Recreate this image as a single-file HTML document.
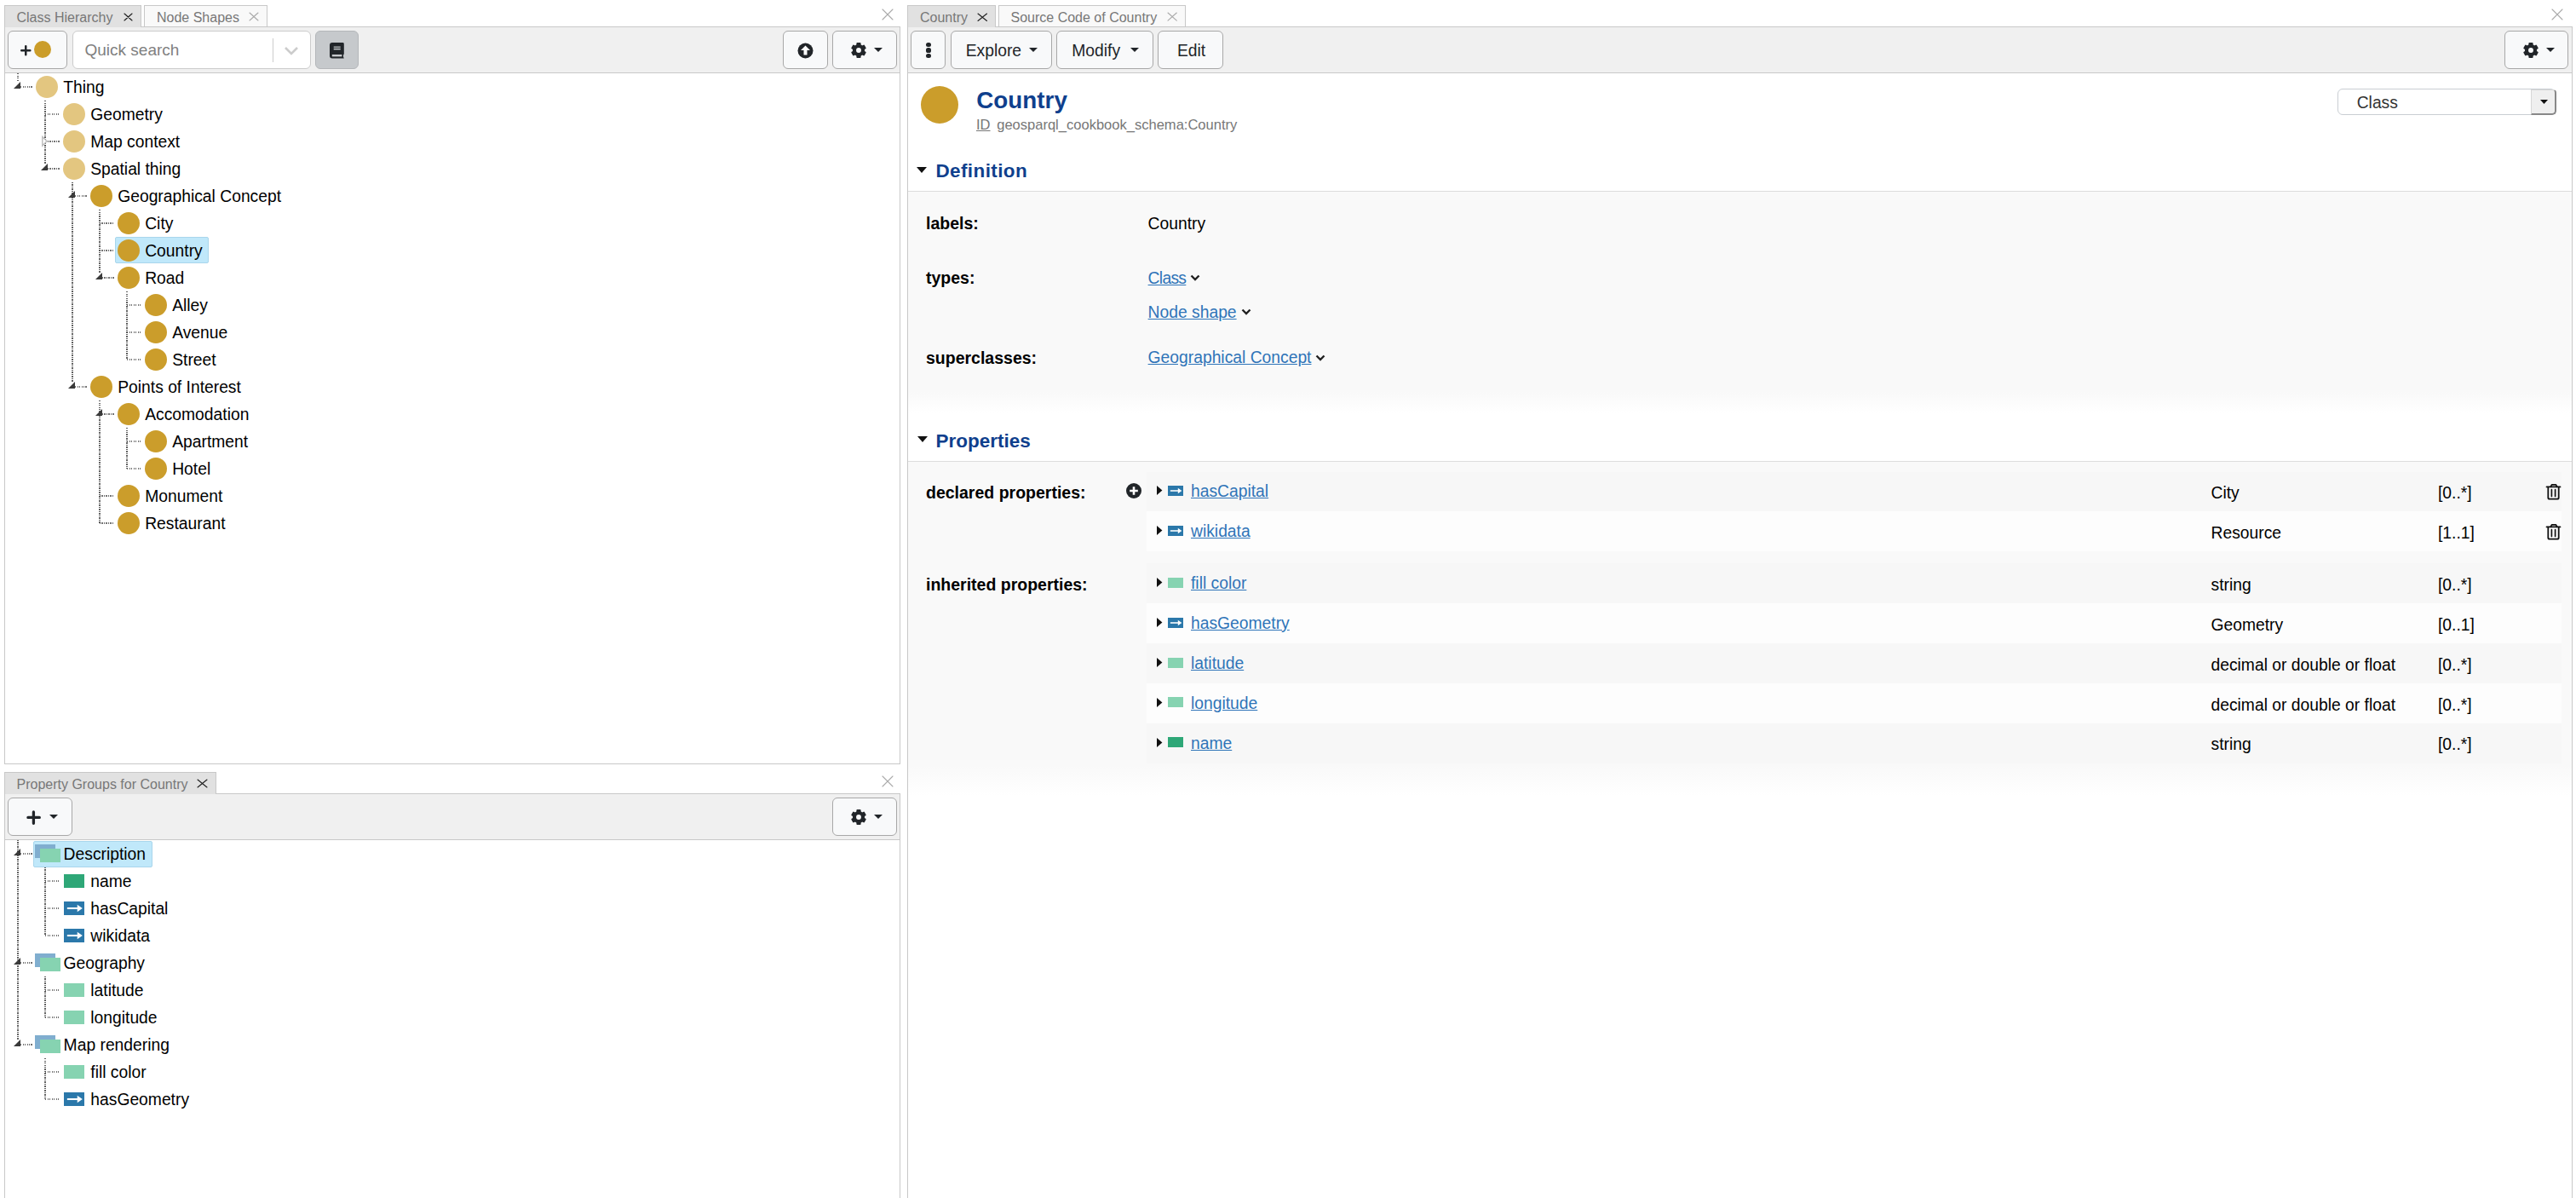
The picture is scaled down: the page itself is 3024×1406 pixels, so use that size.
<!DOCTYPE html>
<html><head><meta charset="utf-8"><style>
html,body{margin:0;padding:0}
body{width:3024px;height:1406px;position:relative;overflow:hidden;background:#fff;font-family:"Liberation Sans",sans-serif;}
.a{position:absolute}
.t{position:absolute;line-height:0;white-space:nowrap}
svg.a{display:block;overflow:visible}
</style></head><body>
<div class="a" style="left:5px;top:31px;width:1052px;height:866px;border:1px solid #c8c8c8;box-sizing:border-box;background:#fff;"></div>
<div class="a" style="left:5px;top:31px;width:1052px;height:55px;background:#f0f0f0;border:1px solid #c8c8c8;box-sizing:border-box;"></div>
<div class="a" style="left:5px;top:6px;width:161px;height:26px;background:#e1e1e1;border:1px solid #c8c8c8;border-bottom:none;box-sizing:border-box;"></div>
<div class="t" style="left:19.5px;top:21.26px;font-size:16px;color:#777;font-weight:400;">Class Hierarchy</div>
<svg class="a" style="left:144.5px;top:14.5px" width="11.0" height="10.0" viewBox="0 0 11.0 10.0"><path d="M1 1L10.0 9.0M10.0 1L1 9.0" stroke="#222" stroke-width="1.15" stroke-linecap="round"/></svg>
<div class="a" style="left:169px;top:6px;width:145px;height:26px;background:#f9f9f9;border:1px solid #c8c8c8;border-bottom:1px solid #c8c8c8;box-sizing:border-box;"></div>
<div class="t" style="left:184px;top:21.26px;font-size:16px;color:#777;font-weight:400;">Node Shapes</div>
<svg class="a" style="left:292px;top:14px" width="12" height="11" viewBox="0 0 12 11"><path d="M1 1L11 10M11 1L1 10" stroke="#aaa" stroke-width="1.1" stroke-linecap="round"/></svg>
<svg class="a" style="left:1035px;top:10px" width="14" height="14" viewBox="0 0 14 14"><path d="M1 1L13 13M13 1L1 13" stroke="#aaa" stroke-width="1.1" stroke-linecap="round"/></svg>
<div class="a" style="left:9px;top:36px;width:70px;height:45px;background:#f8f9fa;border:1px solid #a8a8a8;border-radius:6px;box-sizing:border-box;"></div>
<svg class="a" style="left:23.5px;top:52.5px" width="12.5" height="12.5" viewBox="0 0 12.5 12.5"><path d="M6.25 1.2V11.3M1.2 6.25H11.3" stroke="#212529" stroke-width="2.5" stroke-linecap="round"/></svg>
<div class="a" style="left:39.8px;top:47.9px;width:20.4px;height:20.6px;background:#cb9d2a;border-radius:50%;"></div>
<div class="a" style="left:85px;top:36px;width:280px;height:45px;background:#fff;border:1px solid #ccc;border-radius:6px;box-sizing:border-box;"></div>
<div class="t" style="left:99.5px;top:59.22px;font-size:19px;color:#808080;font-weight:400;">Quick search</div>
<div class="a" style="left:320px;top:45px;width:1px;height:28px;background:#ccc;"></div>
<svg class="a" style="left:333px;top:54px" width="18" height="11" viewBox="0 0 18 11"><path d="M2 2L9 9L16 2" stroke="#ccc" stroke-width="2.6" fill="none"/></svg>
<div class="a" style="left:370px;top:36px;width:51px;height:45px;background:#c6c9cc;border:1px solid #b4b7ba;border-radius:6px;box-sizing:border-box;"></div>
<svg class="a" style="left:387.3px;top:49.6px" width="17" height="18.4" viewBox="0 0 17 18.4"><path d="M3 0H15.3A1.5 1.5 0 0 1 16.8 1.5V13.6L16 14.4V16.6L16.8 18.4H3A3 3 0 0 1 0 15.4V3A3 3 0 0 1 3 0Z" fill="#212529"/><rect x="4.7" y="4.4" width="8" height="1.7" fill="#c6c9cc" opacity=".75"/><rect x="4.7" y="6.9" width="8" height="1.5" fill="#c6c9cc"/><rect x="2.8" y="14" width="11.6" height="2.4" fill="#c6c9cc"/></svg>
<div class="a" style="left:919px;top:36px;width:53px;height:45px;background:#f8f9fa;border:1px solid #a8a8a8;border-radius:6px;box-sizing:border-box;"></div>
<svg class="a" style="left:936px;top:50px" width="19" height="19" viewBox="0 0 19 19"><circle cx="9.5" cy="9.5" r="9" fill="#212529"/><path d="M9.5 3.5L15 9H11.5V14.5H7.5V9H4Z" fill="#fff"/></svg>
<div class="a" style="left:977px;top:36px;width:76px;height:45px;background:#f8f9fa;border:1px solid #a8a8a8;border-radius:6px;box-sizing:border-box;"></div>
<svg class="a" style="left:997.5px;top:49px" width="20" height="20" viewBox="0 0 20 20"><g transform="translate(10 10)" fill="#212529"><rect x="-2.6" y="-8.9" width="5.2" height="17.8" rx="0.9" transform="rotate(0)"/><rect x="-2.6" y="-8.9" width="5.2" height="17.8" rx="0.9" transform="rotate(60)"/><rect x="-2.6" y="-8.9" width="5.2" height="17.8" rx="0.9" transform="rotate(120)"/><circle r="7.1"/><circle r="2.95" fill="#f8f9fa"/></g></svg>
<svg class="a" style="left:1026px;top:56px" width="10" height="5" viewBox="0 0 10 5"><path d="M0 0H10L5.0 5Z" fill="#212529"/></svg>
<div class="a" style="left:52px;top:118px;width:2px;height:74px;background:repeating-linear-gradient(to bottom,#444 0 1.25px,transparent 1.25px 2.5px);opacity:.85"></div>
<div class="a" style="left:84px;top:214px;width:2px;height:234px;background:repeating-linear-gradient(to bottom,#444 0 1.25px,transparent 1.25px 2.5px);opacity:.85"></div>
<div class="a" style="left:116px;top:246px;width:2px;height:74px;background:repeating-linear-gradient(to bottom,#444 0 1.25px,transparent 1.25px 2.5px);opacity:.85"></div>
<div class="a" style="left:148px;top:342px;width:2px;height:80px;background:repeating-linear-gradient(to bottom,#444 0 1.25px,transparent 1.25px 2.5px);opacity:.85"></div>
<div class="a" style="left:116px;top:470px;width:2px;height:144px;background:repeating-linear-gradient(to bottom,#444 0 1.25px,transparent 1.25px 2.5px);opacity:.85"></div>
<div class="a" style="left:148px;top:502px;width:2px;height:48px;background:repeating-linear-gradient(to bottom,#444 0 1.25px,transparent 1.25px 2.5px);opacity:.85"></div>
<div class="a" style="left:24px;top:101px;width:14px;height:2px;background:repeating-linear-gradient(to right,#444 0 1.25px,transparent 1.25px 2.5px);opacity:.75"></div>
<div class="a" style="left:53px;top:133px;width:17px;height:2px;background:repeating-linear-gradient(to right,#444 0 1.25px,transparent 1.25px 2.5px);opacity:.75"></div>
<div class="a" style="left:56px;top:165px;width:14px;height:2px;background:repeating-linear-gradient(to right,#444 0 1.25px,transparent 1.25px 2.5px);opacity:.75"></div>
<div class="a" style="left:56px;top:197px;width:14px;height:2px;background:repeating-linear-gradient(to right,#444 0 1.25px,transparent 1.25px 2.5px);opacity:.75"></div>
<div class="a" style="left:88px;top:229px;width:14px;height:2px;background:repeating-linear-gradient(to right,#444 0 1.25px,transparent 1.25px 2.5px);opacity:.75"></div>
<div class="a" style="left:117px;top:261px;width:17px;height:2px;background:repeating-linear-gradient(to right,#444 0 1.25px,transparent 1.25px 2.5px);opacity:.75"></div>
<div class="a" style="left:117px;top:293px;width:17px;height:2px;background:repeating-linear-gradient(to right,#444 0 1.25px,transparent 1.25px 2.5px);opacity:.75"></div>
<div class="a" style="left:120px;top:325px;width:14px;height:2px;background:repeating-linear-gradient(to right,#444 0 1.25px,transparent 1.25px 2.5px);opacity:.75"></div>
<div class="a" style="left:149px;top:357px;width:17px;height:2px;background:repeating-linear-gradient(to right,#444 0 1.25px,transparent 1.25px 2.5px);opacity:.75"></div>
<div class="a" style="left:149px;top:389px;width:17px;height:2px;background:repeating-linear-gradient(to right,#444 0 1.25px,transparent 1.25px 2.5px);opacity:.75"></div>
<div class="a" style="left:149px;top:421px;width:17px;height:2px;background:repeating-linear-gradient(to right,#444 0 1.25px,transparent 1.25px 2.5px);opacity:.75"></div>
<div class="a" style="left:88px;top:453px;width:14px;height:2px;background:repeating-linear-gradient(to right,#444 0 1.25px,transparent 1.25px 2.5px);opacity:.75"></div>
<div class="a" style="left:120px;top:485px;width:14px;height:2px;background:repeating-linear-gradient(to right,#444 0 1.25px,transparent 1.25px 2.5px);opacity:.75"></div>
<div class="a" style="left:149px;top:517px;width:17px;height:2px;background:repeating-linear-gradient(to right,#444 0 1.25px,transparent 1.25px 2.5px);opacity:.75"></div>
<div class="a" style="left:149px;top:549px;width:17px;height:2px;background:repeating-linear-gradient(to right,#444 0 1.25px,transparent 1.25px 2.5px);opacity:.75"></div>
<div class="a" style="left:117px;top:581px;width:17px;height:2px;background:repeating-linear-gradient(to right,#444 0 1.25px,transparent 1.25px 2.5px);opacity:.75"></div>
<div class="a" style="left:117px;top:613px;width:17px;height:2px;background:repeating-linear-gradient(to right,#444 0 1.25px,transparent 1.25px 2.5px);opacity:.75"></div>
<div class="a" style="left:20px;top:86px;width:2px;height:10px;background:repeating-linear-gradient(to bottom,#444 0 1.25px,transparent 1.25px 2.5px);opacity:.85"></div>
<svg class="a" style="left:16px;top:96px" width="8" height="8" viewBox="0 0 8 8"><path d="M8 0V8H0Z" fill="#3a3a3a"/></svg>
<div class="a" style="left:42px;top:89px;width:26px;height:26px;background:#e3c680;border-radius:50%;"></div>
<div class="t" style="left:74.2px;top:103.11px;font-size:19.3px;color:#000;font-weight:400;">Thing</div>
<div class="a" style="left:74px;top:121px;width:26px;height:26px;background:#e3c680;border-radius:50%;"></div>
<div class="t" style="left:106.2px;top:135.11px;font-size:19.3px;color:#000;font-weight:400;">Geometry</div>
<svg class="a" style="left:49px;top:160.2px" width="7" height="12" viewBox="0 0 7 12"><path d="M0.8 0.6L6 5.85L0.8 11.1Z" fill="#fff" stroke="#bbb" stroke-width="1.4"/></svg>
<div class="a" style="left:74px;top:153px;width:26px;height:26px;background:#e3c680;border-radius:50%;"></div>
<div class="t" style="left:106.2px;top:167.11px;font-size:19.3px;color:#000;font-weight:400;">Map context</div>
<svg class="a" style="left:48px;top:192px" width="8" height="8" viewBox="0 0 8 8"><path d="M8 0V8H0Z" fill="#3a3a3a"/></svg>
<div class="a" style="left:74px;top:185px;width:26px;height:26px;background:#e3c680;border-radius:50%;"></div>
<div class="t" style="left:106.2px;top:199.11px;font-size:19.3px;color:#000;font-weight:400;">Spatial thing</div>
<svg class="a" style="left:80px;top:224px" width="8" height="8" viewBox="0 0 8 8"><path d="M8 0V8H0Z" fill="#3a3a3a"/></svg>
<div class="a" style="left:106px;top:217px;width:26px;height:26px;background:#cb9d2b;border-radius:50%;"></div>
<div class="t" style="left:138.2px;top:231.11px;font-size:19.3px;color:#000;font-weight:400;">Geographical Concept</div>
<div class="a" style="left:138px;top:249px;width:26px;height:26px;background:#cb9d2b;border-radius:50%;"></div>
<div class="t" style="left:170.2px;top:263.11px;font-size:19.3px;color:#000;font-weight:400;">City</div>
<div class="a" style="left:134.5px;top:278px;width:110.5px;height:31px;background:#c0e8fa;border:1px solid #a9d6ec;border-radius:2px;box-sizing:border-box;"></div>
<div class="a" style="left:138px;top:281px;width:26px;height:26px;background:#cb9d2b;border-radius:50%;"></div>
<div class="t" style="left:170.2px;top:295.11px;font-size:19.3px;color:#000;font-weight:400;">Country</div>
<svg class="a" style="left:112px;top:320px" width="8" height="8" viewBox="0 0 8 8"><path d="M8 0V8H0Z" fill="#3a3a3a"/></svg>
<div class="a" style="left:138px;top:313px;width:26px;height:26px;background:#cb9d2b;border-radius:50%;"></div>
<div class="t" style="left:170.2px;top:327.11px;font-size:19.3px;color:#000;font-weight:400;">Road</div>
<div class="a" style="left:170px;top:345px;width:26px;height:26px;background:#cb9d2b;border-radius:50%;"></div>
<div class="t" style="left:202.2px;top:359.11px;font-size:19.3px;color:#000;font-weight:400;">Alley</div>
<div class="a" style="left:170px;top:377px;width:26px;height:26px;background:#cb9d2b;border-radius:50%;"></div>
<div class="t" style="left:202.2px;top:391.11px;font-size:19.3px;color:#000;font-weight:400;">Avenue</div>
<div class="a" style="left:170px;top:409px;width:26px;height:26px;background:#cb9d2b;border-radius:50%;"></div>
<div class="t" style="left:202.2px;top:423.11px;font-size:19.3px;color:#000;font-weight:400;">Street</div>
<svg class="a" style="left:80px;top:448px" width="8" height="8" viewBox="0 0 8 8"><path d="M8 0V8H0Z" fill="#3a3a3a"/></svg>
<div class="a" style="left:106px;top:441px;width:26px;height:26px;background:#cb9d2b;border-radius:50%;"></div>
<div class="t" style="left:138.2px;top:455.11px;font-size:19.3px;color:#000;font-weight:400;">Points of Interest</div>
<svg class="a" style="left:112px;top:480px" width="8" height="8" viewBox="0 0 8 8"><path d="M8 0V8H0Z" fill="#3a3a3a"/></svg>
<div class="a" style="left:138px;top:473px;width:26px;height:26px;background:#cb9d2b;border-radius:50%;"></div>
<div class="t" style="left:170.2px;top:487.11px;font-size:19.3px;color:#000;font-weight:400;">Accomodation</div>
<div class="a" style="left:170px;top:505px;width:26px;height:26px;background:#cb9d2b;border-radius:50%;"></div>
<div class="t" style="left:202.2px;top:519.11px;font-size:19.3px;color:#000;font-weight:400;">Apartment</div>
<div class="a" style="left:170px;top:537px;width:26px;height:26px;background:#cb9d2b;border-radius:50%;"></div>
<div class="t" style="left:202.2px;top:551.11px;font-size:19.3px;color:#000;font-weight:400;">Hotel</div>
<div class="a" style="left:138px;top:569px;width:26px;height:26px;background:#cb9d2b;border-radius:50%;"></div>
<div class="t" style="left:170.2px;top:583.11px;font-size:19.3px;color:#000;font-weight:400;">Monument</div>
<div class="a" style="left:138px;top:601px;width:26px;height:26px;background:#cb9d2b;border-radius:50%;"></div>
<div class="t" style="left:170.2px;top:615.11px;font-size:19.3px;color:#000;font-weight:400;">Restaurant</div>
<div class="a" style="left:5px;top:931px;width:1052px;height:485px;border:1px solid #c8c8c8;border-bottom:none;box-sizing:border-box;background:#fff;"></div>
<div class="a" style="left:5px;top:931px;width:1052px;height:55px;background:#f0f0f0;border:1px solid #c8c8c8;box-sizing:border-box;"></div>
<div class="a" style="left:5px;top:906px;width:249px;height:26px;background:#e1e1e1;border:1px solid #c8c8c8;border-bottom:none;box-sizing:border-box;"></div>
<div class="t" style="left:19.5px;top:921.26px;font-size:16px;color:#777;font-weight:400;">Property Groups for Country</div>
<svg class="a" style="left:231px;top:914px" width="13" height="11" viewBox="0 0 13 11"><path d="M1 1L12 10M12 1L1 10" stroke="#222" stroke-width="1.15" stroke-linecap="round"/></svg>
<svg class="a" style="left:1035px;top:910px" width="14" height="14" viewBox="0 0 14 14"><path d="M1 1L13 13M13 1L1 13" stroke="#aaa" stroke-width="1.1" stroke-linecap="round"/></svg>
<div class="a" style="left:9px;top:936px;width:76px;height:45px;background:#f8f9fa;border:1px solid #a8a8a8;border-radius:6px;box-sizing:border-box;"></div>
<svg class="a" style="left:31px;top:950.5px" width="17" height="17" viewBox="0 0 17 17"><path d="M8.4 1.9V15.3M1.9 8.4H15.3" stroke="#212529" stroke-width="3.3" stroke-linecap="round"/></svg>
<svg class="a" style="left:58px;top:956px" width="10" height="5" viewBox="0 0 10 5"><path d="M0 0H10L5.0 5Z" fill="#212529"/></svg>
<div class="a" style="left:977px;top:936px;width:76px;height:45px;background:#f8f9fa;border:1px solid #a8a8a8;border-radius:6px;box-sizing:border-box;"></div>
<svg class="a" style="left:997.5px;top:949px" width="20" height="20" viewBox="0 0 20 20"><g transform="translate(10 10)" fill="#212529"><rect x="-2.6" y="-8.9" width="5.2" height="17.8" rx="0.9" transform="rotate(0)"/><rect x="-2.6" y="-8.9" width="5.2" height="17.8" rx="0.9" transform="rotate(60)"/><rect x="-2.6" y="-8.9" width="5.2" height="17.8" rx="0.9" transform="rotate(120)"/><circle r="7.1"/><circle r="2.95" fill="#f8f9fa"/></g></svg>
<svg class="a" style="left:1026px;top:956px" width="10" height="5" viewBox="0 0 10 5"><path d="M0 0H10L5.0 5Z" fill="#212529"/></svg>
<div class="a" style="left:20px;top:986px;width:2px;height:234px;background:repeating-linear-gradient(to bottom,#444 0 1.25px,transparent 1.25px 2.5px);opacity:.85"></div>
<div class="a" style="left:52px;top:1018px;width:2px;height:80px;background:repeating-linear-gradient(to bottom,#444 0 1.25px,transparent 1.25px 2.5px);opacity:.85"></div>
<div class="a" style="left:52px;top:1146px;width:2px;height:48px;background:repeating-linear-gradient(to bottom,#444 0 1.25px,transparent 1.25px 2.5px);opacity:.85"></div>
<div class="a" style="left:52px;top:1242px;width:2px;height:48px;background:repeating-linear-gradient(to bottom,#444 0 1.25px,transparent 1.25px 2.5px);opacity:.85"></div>
<div class="a" style="left:24px;top:1001px;width:14px;height:2px;background:repeating-linear-gradient(to right,#444 0 1.25px,transparent 1.25px 2.5px);opacity:.75"></div>
<div class="a" style="left:53px;top:1033px;width:17px;height:2px;background:repeating-linear-gradient(to right,#444 0 1.25px,transparent 1.25px 2.5px);opacity:.75"></div>
<div class="a" style="left:53px;top:1065px;width:17px;height:2px;background:repeating-linear-gradient(to right,#444 0 1.25px,transparent 1.25px 2.5px);opacity:.75"></div>
<div class="a" style="left:53px;top:1097px;width:17px;height:2px;background:repeating-linear-gradient(to right,#444 0 1.25px,transparent 1.25px 2.5px);opacity:.75"></div>
<div class="a" style="left:24px;top:1129px;width:14px;height:2px;background:repeating-linear-gradient(to right,#444 0 1.25px,transparent 1.25px 2.5px);opacity:.75"></div>
<div class="a" style="left:53px;top:1161px;width:17px;height:2px;background:repeating-linear-gradient(to right,#444 0 1.25px,transparent 1.25px 2.5px);opacity:.75"></div>
<div class="a" style="left:53px;top:1193px;width:17px;height:2px;background:repeating-linear-gradient(to right,#444 0 1.25px,transparent 1.25px 2.5px);opacity:.75"></div>
<div class="a" style="left:24px;top:1225px;width:14px;height:2px;background:repeating-linear-gradient(to right,#444 0 1.25px,transparent 1.25px 2.5px);opacity:.75"></div>
<div class="a" style="left:53px;top:1257px;width:17px;height:2px;background:repeating-linear-gradient(to right,#444 0 1.25px,transparent 1.25px 2.5px);opacity:.75"></div>
<div class="a" style="left:53px;top:1289px;width:17px;height:2px;background:repeating-linear-gradient(to right,#444 0 1.25px,transparent 1.25px 2.5px);opacity:.75"></div>
<div class="a" style="left:38.5px;top:986.5px;width:140px;height:31px;background:#c0e8fa;border:1px solid #a9d6ec;border-radius:2px;box-sizing:border-box;"></div>
<svg class="a" style="left:16px;top:996px" width="8" height="8" viewBox="0 0 8 8"><path d="M8 0V8H0Z" fill="#3a3a3a"/></svg>
<div class="a" style="left:41px;top:991px;width:24px;height:16px;background:#80aecf;"></div>
<div class="a" style="left:47px;top:996px;width:24px;height:16px;background:#86d3b1;"></div>
<div class="t" style="left:74.6px;top:1003.11px;font-size:19.3px;color:#000;font-weight:400;">Description</div>
<div class="a" style="left:75px;top:1026px;width:24px;height:16px;background:#2ea777;"></div>
<div class="t" style="left:106.3px;top:1035.11px;font-size:19.3px;color:#000;font-weight:400;">name</div>
<svg class="a" style="left:75px;top:1058px" width="24" height="16" viewBox="0 0 24 16"><rect width="24" height="16" fill="#2b78aa"/><rect x="3.84" y="6.96" width="12.48" height="2.08" fill="#fff"/><path d="M15.72 3.76L21.84 8.00L15.72 12.24Z" fill="#fff"/></svg>
<div class="t" style="left:106.3px;top:1067.11px;font-size:19.3px;color:#000;font-weight:400;">hasCapital</div>
<svg class="a" style="left:75px;top:1090px" width="24" height="16" viewBox="0 0 24 16"><rect width="24" height="16" fill="#2b78aa"/><rect x="3.84" y="6.96" width="12.48" height="2.08" fill="#fff"/><path d="M15.72 3.76L21.84 8.00L15.72 12.24Z" fill="#fff"/></svg>
<div class="t" style="left:106.3px;top:1099.11px;font-size:19.3px;color:#000;font-weight:400;">wikidata</div>
<svg class="a" style="left:16px;top:1124px" width="8" height="8" viewBox="0 0 8 8"><path d="M8 0V8H0Z" fill="#3a3a3a"/></svg>
<div class="a" style="left:41px;top:1119px;width:24px;height:16px;background:#80aecf;"></div>
<div class="a" style="left:47px;top:1124px;width:24px;height:16px;background:#86d3b1;"></div>
<div class="t" style="left:74.6px;top:1131.11px;font-size:19.3px;color:#000;font-weight:400;">Geography</div>
<div class="a" style="left:75px;top:1154px;width:24px;height:16px;background:#86d3b1;"></div>
<div class="t" style="left:106.3px;top:1163.11px;font-size:19.3px;color:#000;font-weight:400;">latitude</div>
<div class="a" style="left:75px;top:1186px;width:24px;height:16px;background:#86d3b1;"></div>
<div class="t" style="left:106.3px;top:1195.11px;font-size:19.3px;color:#000;font-weight:400;">longitude</div>
<svg class="a" style="left:16px;top:1220px" width="8" height="8" viewBox="0 0 8 8"><path d="M8 0V8H0Z" fill="#3a3a3a"/></svg>
<div class="a" style="left:41px;top:1215px;width:24px;height:16px;background:#80aecf;"></div>
<div class="a" style="left:47px;top:1220px;width:24px;height:16px;background:#86d3b1;"></div>
<div class="t" style="left:74.6px;top:1227.11px;font-size:19.3px;color:#000;font-weight:400;">Map rendering</div>
<div class="a" style="left:75px;top:1250px;width:24px;height:16px;background:#86d3b1;"></div>
<div class="t" style="left:106.3px;top:1259.11px;font-size:19.3px;color:#000;font-weight:400;">fill color</div>
<svg class="a" style="left:75px;top:1282px" width="24" height="16" viewBox="0 0 24 16"><rect width="24" height="16" fill="#2b78aa"/><rect x="3.84" y="6.96" width="12.48" height="2.08" fill="#fff"/><path d="M15.72 3.76L21.84 8.00L15.72 12.24Z" fill="#fff"/></svg>
<div class="t" style="left:106.3px;top:1291.11px;font-size:19.3px;color:#000;font-weight:400;">hasGeometry</div>
<div class="a" style="left:1065px;top:31px;width:1955px;height:1385px;border:1px solid #c8c8c8;border-bottom:none;box-sizing:border-box;background:#fff;"></div>
<div class="a" style="left:1065px;top:31px;width:1955px;height:55px;background:#f0f0f0;border:1px solid #c8c8c8;box-sizing:border-box;"></div>
<div class="a" style="left:1065px;top:6px;width:104px;height:26px;background:#e1e1e1;border:1px solid #c8c8c8;border-bottom:none;box-sizing:border-box;"></div>
<div class="t" style="left:1080px;top:21.26px;font-size:16px;color:#777;font-weight:400;">Country</div>
<svg class="a" style="left:1146.5px;top:14.5px" width="12.5" height="10.5" viewBox="0 0 12.5 10.5"><path d="M1 1L11.5 9.5M11.5 1L1 9.5" stroke="#222" stroke-width="1.15" stroke-linecap="round"/></svg>
<div class="a" style="left:1172px;top:6px;width:220px;height:26px;background:#f9f9f9;border:1px solid #c8c8c8;border-bottom:1px solid #c8c8c8;box-sizing:border-box;"></div>
<div class="t" style="left:1186.5px;top:21.26px;font-size:16px;color:#777;font-weight:400;">Source Code of Country</div>
<svg class="a" style="left:1370px;top:14px" width="12.299999999999955" height="11.2" viewBox="0 0 12.299999999999955 11.2"><path d="M1 1L11.299999999999955 10.2M11.299999999999955 1L1 10.2" stroke="#aaa" stroke-width="1.1" stroke-linecap="round"/></svg>
<svg class="a" style="left:2995px;top:10px" width="14" height="14" viewBox="0 0 14 14"><path d="M1 1L13 13M13 1L1 13" stroke="#aaa" stroke-width="1.1" stroke-linecap="round"/></svg>
<div class="a" style="left:1069px;top:36px;width:41px;height:45px;background:#f8f9fa;border:1px solid #a8a8a8;border-radius:6px;box-sizing:border-box;"></div>
<div class="a" style="left:1087.4px;top:49.9px;width:5.2px;height:5.2px;background:#212529;border-radius:50%;"></div>
<div class="a" style="left:1087.4px;top:56.4px;width:5.2px;height:5.2px;background:#212529;border-radius:50%;"></div>
<div class="a" style="left:1087.4px;top:62.9px;width:5.2px;height:5.2px;background:#212529;border-radius:50%;"></div>
<div class="a" style="left:1116px;top:36px;width:119px;height:45px;background:#f8f9fa;border:1px solid #a8a8a8;border-radius:6px;box-sizing:border-box;"></div>
<div class="t" style="left:1133.7px;top:60.11px;font-size:19.3px;color:#212529;font-weight:400;">Explore</div>
<svg class="a" style="left:1208px;top:56px" width="10" height="5" viewBox="0 0 10 5"><path d="M0 0H10L5.0 5Z" fill="#212529"/></svg>
<div class="a" style="left:1240px;top:36px;width:114px;height:45px;background:#f8f9fa;border:1px solid #a8a8a8;border-radius:6px;box-sizing:border-box;"></div>
<div class="t" style="left:1258.3px;top:60.11px;font-size:19.3px;color:#212529;font-weight:400;">Modify</div>
<svg class="a" style="left:1327px;top:56px" width="10" height="5" viewBox="0 0 10 5"><path d="M0 0H10L5.0 5Z" fill="#212529"/></svg>
<div class="a" style="left:1359px;top:36px;width:77px;height:45px;background:#f8f9fa;border:1px solid #a8a8a8;border-radius:6px;box-sizing:border-box;"></div>
<div class="t" style="left:1382px;top:60.11px;font-size:19.3px;color:#212529;font-weight:400;">Edit</div>
<div class="a" style="left:2940px;top:36px;width:75px;height:45px;background:#f8f9fa;border:1px solid #a8a8a8;border-radius:6px;box-sizing:border-box;"></div>
<svg class="a" style="left:2960.5px;top:49px" width="20" height="20" viewBox="0 0 20 20"><g transform="translate(10 10)" fill="#212529"><rect x="-2.6" y="-8.9" width="5.2" height="17.8" rx="0.9" transform="rotate(0)"/><rect x="-2.6" y="-8.9" width="5.2" height="17.8" rx="0.9" transform="rotate(60)"/><rect x="-2.6" y="-8.9" width="5.2" height="17.8" rx="0.9" transform="rotate(120)"/><circle r="7.1"/><circle r="2.95" fill="#f8f9fa"/></g></svg>
<svg class="a" style="left:2988.5px;top:56px" width="10" height="5" viewBox="0 0 10 5"><path d="M0 0H10L5.0 5Z" fill="#212529"/></svg>
<div class="a" style="left:1081px;top:101px;width:44px;height:44px;background:#cb9d2b;border-radius:50%;"></div>
<div class="t" style="left:1146.3px;top:118.17px;font-size:27.8px;color:#0f3f8d;font-weight:700;">Country</div>
<div class="t" style="left:1146px;top:146.08px;font-size:16.5px;color:#777;font-weight:400;text-decoration:underline;">ID</div>
<div class="t" style="left:1170.2px;top:146.57px;font-size:16.55px;color:#777;font-weight:400;">geosparql_cookbook_schema:Country</div>
<div class="a" style="left:2744px;top:104px;width:256px;height:31px;background:#fff;border:1px solid #c9ced3;border-radius:6px;box-sizing:border-box;"></div>
<div class="a" style="left:2971px;top:105px;width:30px;height:29.5px;background:#efefef;border-top:1.5px solid #d6d6d6;border-left:1.5px solid #d6d6d6;border-right:2px solid #888;border-bottom:2px solid #888;box-sizing:border-box;border-radius:0 4px 5px 0;"></div>
<svg class="a" style="left:2982px;top:116.8px" width="9" height="5" viewBox="0 0 9 5"><path d="M0 0H9L4.5 5Z" fill="#111"/></svg>
<div class="t" style="left:2766.7px;top:121.11px;font-size:19.3px;color:#333;font-weight:400;">Class</div>
<svg class="a" style="left:1076px;top:196px" width="12" height="7" viewBox="0 0 12 7"><path d="M0 0H12L6 7Z" fill="#111"/></svg>
<div class="t" style="left:1098.4px;top:200.60px;font-size:22.5px;color:#0f3f8d;font-weight:700;letter-spacing:0.4px;">Definition</div>
<div class="a" style="left:1066px;top:224px;width:1953px;height:1px;background:#ddd;"></div>
<div class="a" style="left:1066px;top:225px;width:1953px;height:260px;background:linear-gradient(#f9f9f9 0,#f9f9f9 235px,#fff 260px);"></div>
<div class="t" style="left:1087px;top:262.44px;font-size:19.5px;color:#000;font-weight:700;">labels:</div>
<div class="t" style="left:1347.6px;top:262.51px;font-size:19.3px;color:#000;font-weight:400;">Country</div>
<div class="t" style="left:1087px;top:326.04px;font-size:19.5px;color:#000;font-weight:700;">types:</div>
<div class="t" style="left:1347.6px;top:326.51px;font-size:19.3px;color:#2f74b8;font-weight:400;text-decoration:underline;letter-spacing:-0.7px;">Class</div>
<svg class="a" style="left:1397px;top:322px" width="12" height="8" viewBox="0 0 12 8"><path d="M1.5 1.5L6 6L10.5 1.5" stroke="#222" stroke-width="2.4" fill="none"/></svg>
<div class="t" style="left:1347.6px;top:366.71px;font-size:19.3px;color:#2f74b8;font-weight:400;text-decoration:underline;">Node shape</div>
<svg class="a" style="left:1457px;top:362px" width="12" height="8" viewBox="0 0 12 8"><path d="M1.5 1.5L6 6L10.5 1.5" stroke="#222" stroke-width="2.4" fill="none"/></svg>
<div class="t" style="left:1087px;top:419.84px;font-size:19.5px;color:#000;font-weight:700;">superclasses:</div>
<div class="t" style="left:1347.6px;top:419.91px;font-size:19.3px;color:#2f74b8;font-weight:400;text-decoration:underline;">Geographical Concept</div>
<svg class="a" style="left:1544px;top:415.5px" width="12" height="8" viewBox="0 0 12 8"><path d="M1.5 1.5L6 6L10.5 1.5" stroke="#222" stroke-width="2.4" fill="none"/></svg>
<svg class="a" style="left:1077px;top:511.5px" width="12" height="7" viewBox="0 0 12 7"><path d="M0 0H12L6 7Z" fill="#111"/></svg>
<div class="t" style="left:1098.6px;top:517.70px;font-size:22.5px;color:#0f3f8d;font-weight:700;">Properties</div>
<div class="a" style="left:1066px;top:541px;width:1953px;height:1px;background:#ddd;"></div>
<div class="a" style="left:1066px;top:542px;width:1953px;height:392px;background:linear-gradient(#f9f9f9 0,#f9f9f9 357px,#fff 392px);"></div>
<div class="t" style="left:1087px;top:577.74px;font-size:19.5px;color:#000;font-weight:700;">declared properties:</div>
<div class="t" style="left:1087px;top:686.04px;font-size:19.5px;color:#000;font-weight:700;">inherited properties:</div>
<svg class="a" style="left:1322px;top:567px" width="18" height="18" viewBox="0 0 18 18"><circle cx="9" cy="9" r="9" fill="#212529"/><path d="M9 4.2V13.8M4.2 9H13.8" stroke="#fff" stroke-width="2.6"/></svg>
<div class="a" style="left:1346px;top:553.5px;width:1661px;height:46.9px;background:#f7f7f7;"></div>
<svg class="a" style="left:1357.5px;top:570.4px" width="6.4" height="11" viewBox="0 0 6.4 11"><path d="M0 0L6.4 5.5L0 11Z" fill="#111"/></svg>
<svg class="a" style="left:1371px;top:570.0px" width="18" height="12" viewBox="0 0 18 12"><rect width="18" height="12" fill="#2b78aa"/><rect x="2.88" y="5.22" width="9.36" height="1.56" fill="#fff"/><path d="M11.79 2.82L16.38 6.00L11.79 9.18Z" fill="#fff"/></svg>
<div class="t" style="left:1398px;top:577.41px;font-size:19.3px;color:#2f74b8;font-weight:400;text-decoration:underline;">hasCapital</div>
<div class="t" style="left:2595.5px;top:579.11px;font-size:19.3px;color:#000;font-weight:400;">City</div>
<div class="t" style="left:2862px;top:579.11px;font-size:19.3px;color:#000;font-weight:400;">[0..*]</div>
<svg class="a" style="left:2988px;top:568.0px" width="19" height="20" viewBox="0 0 19 20"><g stroke="#111" fill="none" stroke-linecap="round" stroke-linejoin="round"><path d="M1.6 3.4H17.4" stroke-width="1.9"/><path d="M6.3 3.2L7.6 0.9H12.4L13.7 3.2" stroke-width="1.8"/><path d="M3.3 4V15.9Q3.3 17.6 5 17.6H14Q15.7 17.6 15.7 15.9V4" stroke-width="1.8"/><path d="M7.4 6.7V14.4M11.6 6.7V14.4" stroke-width="1.7"/></g></svg>
<div class="a" style="left:1346px;top:600.4px;width:1661px;height:46.9px;background:#fdfdfd;"></div>
<svg class="a" style="left:1357.5px;top:617.3px" width="6.4" height="11" viewBox="0 0 6.4 11"><path d="M0 0L6.4 5.5L0 11Z" fill="#111"/></svg>
<svg class="a" style="left:1371px;top:616.9px" width="18" height="12" viewBox="0 0 18 12"><rect width="18" height="12" fill="#2b78aa"/><rect x="2.88" y="5.22" width="9.36" height="1.56" fill="#fff"/><path d="M11.79 2.82L16.38 6.00L11.79 9.18Z" fill="#fff"/></svg>
<div class="t" style="left:1398px;top:624.31px;font-size:19.3px;color:#2f74b8;font-weight:400;text-decoration:underline;">wikidata</div>
<div class="t" style="left:2595.5px;top:626.01px;font-size:19.3px;color:#000;font-weight:400;">Resource</div>
<div class="t" style="left:2862px;top:626.01px;font-size:19.3px;color:#000;font-weight:400;">[1..1]</div>
<svg class="a" style="left:2988px;top:614.9px" width="19" height="20" viewBox="0 0 19 20"><g stroke="#111" fill="none" stroke-linecap="round" stroke-linejoin="round"><path d="M1.6 3.4H17.4" stroke-width="1.9"/><path d="M6.3 3.2L7.6 0.9H12.4L13.7 3.2" stroke-width="1.8"/><path d="M3.3 4V15.9Q3.3 17.6 5 17.6H14Q15.7 17.6 15.7 15.9V4" stroke-width="1.8"/><path d="M7.4 6.7V14.4M11.6 6.7V14.4" stroke-width="1.7"/></g></svg>
<div class="a" style="left:1346px;top:661.2px;width:1661px;height:46.9px;background:#f7f7f7;"></div>
<svg class="a" style="left:1357.5px;top:678.1px" width="6.4" height="11" viewBox="0 0 6.4 11"><path d="M0 0L6.4 5.5L0 11Z" fill="#111"/></svg>
<div class="a" style="left:1371px;top:677.7px;width:18px;height:12px;background:#86d3b1;"></div>
<div class="t" style="left:1398px;top:685.11px;font-size:19.3px;color:#2f74b8;font-weight:400;text-decoration:underline;">fill color</div>
<div class="t" style="left:2595.5px;top:686.81px;font-size:19.3px;color:#000;font-weight:400;">string</div>
<div class="t" style="left:2862px;top:686.81px;font-size:19.3px;color:#000;font-weight:400;">[0..*]</div>
<div class="a" style="left:1346px;top:708.1px;width:1661px;height:46.9px;background:#fdfdfd;"></div>
<svg class="a" style="left:1357.5px;top:725.0px" width="6.4" height="11" viewBox="0 0 6.4 11"><path d="M0 0L6.4 5.5L0 11Z" fill="#111"/></svg>
<svg class="a" style="left:1371px;top:724.6px" width="18" height="12" viewBox="0 0 18 12"><rect width="18" height="12" fill="#2b78aa"/><rect x="2.88" y="5.22" width="9.36" height="1.56" fill="#fff"/><path d="M11.79 2.82L16.38 6.00L11.79 9.18Z" fill="#fff"/></svg>
<div class="t" style="left:1398px;top:732.01px;font-size:19.3px;color:#2f74b8;font-weight:400;text-decoration:underline;">hasGeometry</div>
<div class="t" style="left:2595.5px;top:733.71px;font-size:19.3px;color:#000;font-weight:400;">Geometry</div>
<div class="t" style="left:2862px;top:733.71px;font-size:19.3px;color:#000;font-weight:400;">[0..1]</div>
<div class="a" style="left:1346px;top:755.0px;width:1661px;height:46.9px;background:#f7f7f7;"></div>
<svg class="a" style="left:1357.5px;top:771.9px" width="6.4" height="11" viewBox="0 0 6.4 11"><path d="M0 0L6.4 5.5L0 11Z" fill="#111"/></svg>
<div class="a" style="left:1371px;top:771.5px;width:18px;height:12px;background:#86d3b1;"></div>
<div class="t" style="left:1398px;top:778.91px;font-size:19.3px;color:#2f74b8;font-weight:400;text-decoration:underline;">latitude</div>
<div class="t" style="left:2595.5px;top:780.61px;font-size:19.3px;color:#000;font-weight:400;">decimal or double or float</div>
<div class="t" style="left:2862px;top:780.61px;font-size:19.3px;color:#000;font-weight:400;">[0..*]</div>
<div class="a" style="left:1346px;top:801.9px;width:1661px;height:46.9px;background:#fdfdfd;"></div>
<svg class="a" style="left:1357.5px;top:818.8px" width="6.4" height="11" viewBox="0 0 6.4 11"><path d="M0 0L6.4 5.5L0 11Z" fill="#111"/></svg>
<div class="a" style="left:1371px;top:818.4px;width:18px;height:12px;background:#86d3b1;"></div>
<div class="t" style="left:1398px;top:825.81px;font-size:19.3px;color:#2f74b8;font-weight:400;text-decoration:underline;">longitude</div>
<div class="t" style="left:2595.5px;top:827.51px;font-size:19.3px;color:#000;font-weight:400;">decimal or double or float</div>
<div class="t" style="left:2862px;top:827.51px;font-size:19.3px;color:#000;font-weight:400;">[0..*]</div>
<div class="a" style="left:1346px;top:848.8px;width:1661px;height:46.9px;background:#f7f7f7;"></div>
<svg class="a" style="left:1357.5px;top:865.6999999999999px" width="6.4" height="11" viewBox="0 0 6.4 11"><path d="M0 0L6.4 5.5L0 11Z" fill="#111"/></svg>
<div class="a" style="left:1371px;top:865.3px;width:18px;height:12px;background:#2ea777;"></div>
<div class="t" style="left:1398px;top:872.71px;font-size:19.3px;color:#2f74b8;font-weight:400;text-decoration:underline;">name</div>
<div class="t" style="left:2595.5px;top:874.41px;font-size:19.3px;color:#000;font-weight:400;">string</div>
<div class="t" style="left:2862px;top:874.41px;font-size:19.3px;color:#000;font-weight:400;">[0..*]</div>
</body></html>
